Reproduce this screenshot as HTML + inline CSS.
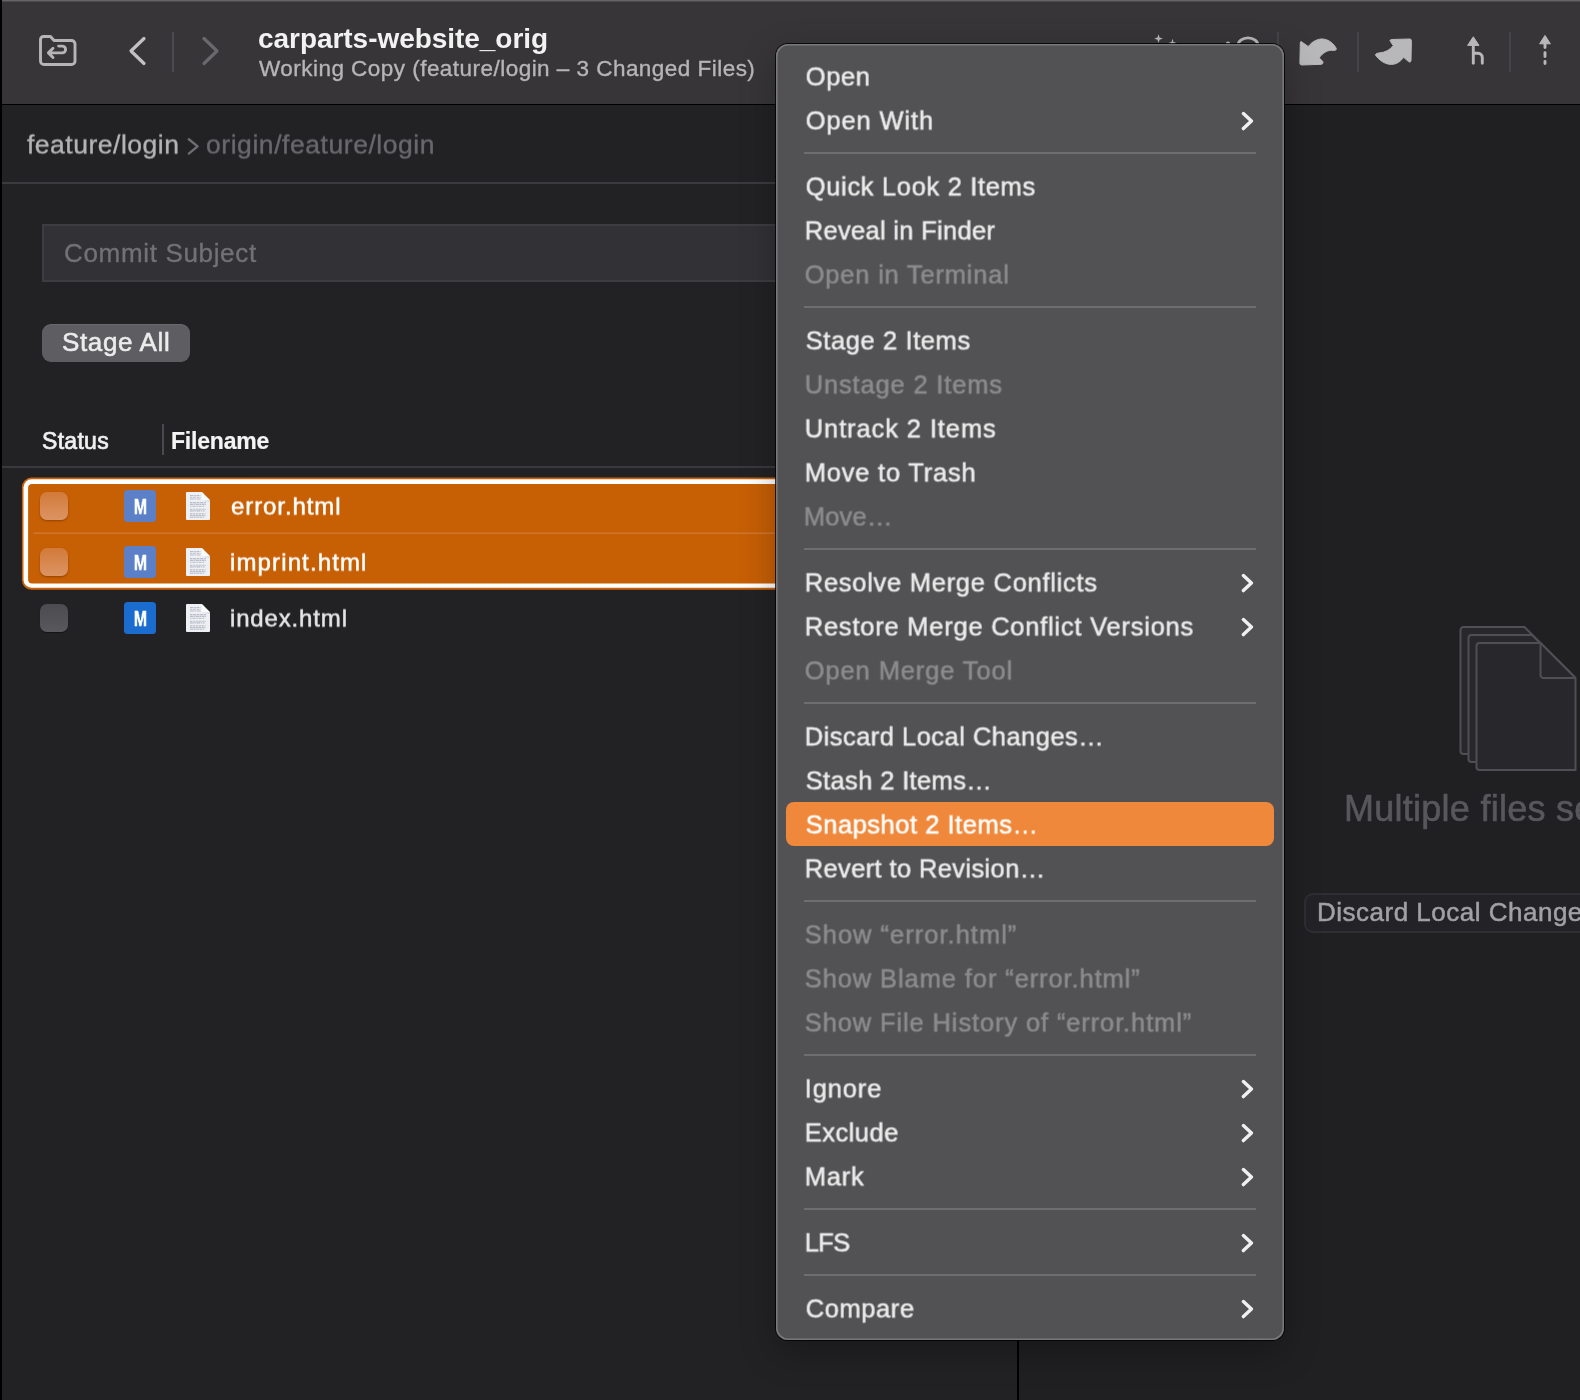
<!DOCTYPE html>
<html lang="en">
<head>
<meta charset="utf-8">
<title>carparts-website_orig</title>
<style>
*{box-sizing:border-box;margin:0;padding:0}
html,body{width:1580px;height:1400px;overflow:hidden;background:#212023}
body{position:relative;font-family:"Liberation Sans",sans-serif;color:#e8e8e8;-webkit-font-smoothing:antialiased}
.abs{position:absolute}
.t{position:absolute;white-space:nowrap;line-height:1;transform-origin:0 0;-webkit-text-stroke:0.35px currentColor;will-change:transform}
/* window chrome */
#leftedge{left:0;top:0;width:2px;height:1400px;background:#000}
#toolbar{left:2px;top:0;width:1578px;height:104px;background:#373538;border-top:1px solid #656467;box-shadow:inset 0 1px 0 #4b4a4d}
#tbline{left:2px;top:103.5px;width:1578px;height:1.5px;background:#000}
#leftpane{left:2px;top:105px;width:1016px;height:1295px;background:#222124}
#vdiv{left:1017px;top:105px;width:2px;height:1295px;background:#000}
#rightpane{left:1019px;top:105px;width:561px;height:1295px;background:#201f22}
#bcline{left:2px;top:182px;width:1015px;height:2px;background:#3b3a3e}
#subject{left:42px;top:224px;width:960px;height:58px;background:#323135;border:2px solid #3d3c40}
#stage{left:42px;top:324px;width:148px;height:38px;border-radius:9px;background:#5e5d61;box-shadow:inset 0 1px 0 rgba(255,255,255,.07)}
#hdrdiv{left:162px;top:424px;width:2px;height:31px;background:#4a494d}
#hdrline{left:2px;top:466px;width:1015px;height:2px;background:#39383c}
/* selection */
.cb{width:28px;height:28px;border-radius:7px;left:40px}
.cb.on{background:linear-gradient(#d27a38,#dc9464);box-shadow:0 1px 2px rgba(80,30,0,.45)}
.cb.off{background:linear-gradient(#4c4b4f,#59585c);box-shadow:0 1px 1px rgba(0,0,0,.4)}
.badge{left:124px;width:32px;height:32px;border-radius:3.5px;color:#fff;font-weight:bold;font-size:22.5px;text-align:center;line-height:33px}
.badge b{display:inline-block;will-change:transform;transform:scaleX(.70);-webkit-text-stroke:.5px #fff}
.badge.s{background:#5c80c8}
.badge.n{background:#1b6ccf}
.ficon{left:185px;width:26px;height:30px}
/* menu */
#menu{left:776px;top:44px;width:508px;height:1296px;border-radius:12px;background:#525254;
 box-shadow:0 0 0 1px rgba(0,0,0,.8),inset 0 0 0 1.6px #78787a,0 12px 36px rgba(0,0,0,.28);padding-top:10px}
.mi{position:relative;height:44px;line-height:44px;font-size:25.5px;color:#ebebeb;-webkit-text-stroke:0.5px currentColor;padding-left:28px;white-space:nowrap}
.mi.d{color:#8b8b8d}
.mi.h{color:#fff}
.mi.h::before{content:"";position:absolute;left:10px;right:10px;top:0;bottom:0;border-radius:8px;background:#f0883b;z-index:0}
.mi span{position:relative;z-index:1;display:inline-block;will-change:transform;top:1px;transform:matrix(1,0.0001,0,1,-.3,-.55)}
.mi svg{position:absolute;right:30px;top:12.5px;width:14px;height:20px}
.sep{height:2px;margin:10px 28px 10px 28px;background:#6e6e70}
#f1,#f2,#f3{-webkit-text-stroke:.5px currentColor}
#sa{-webkit-text-stroke:.55px currentColor}
#hs{-webkit-text-stroke:.7px currentColor}
#hf{-webkit-text-stroke:.2px currentColor}
#bc1,#bc2,#f1,#f2,#f3{transform:matrix(1,0.0001,0,1,0,.5)}
/*FIT*/
#title{letter-spacing:-0.045px;margin-left:-0.50px}
#subtitle{letter-spacing:0.467px;margin-left:0.50px}
#bc1{letter-spacing:0.508px;margin-left:0.70px}
#bc2{letter-spacing:0.553px;margin-left:-1.00px}
#cs{letter-spacing:0.662px;margin-left:-0.60px}
#sa{letter-spacing:0.638px;margin-left:-0.50px}
#hs{letter-spacing:0.300px;margin-left:0.00px}
#hf{letter-spacing:-0.200px;margin-left:-0.60px}
#f1{letter-spacing:0.911px;margin-left:0.60px}
#f2{letter-spacing:1.127px;margin-left:-0.40px}
#f3{letter-spacing:0.844px;margin-left:-0.40px}
#m0{letter-spacing:0.633px;margin-left:1.80px}
#m1{letter-spacing:0.875px;margin-left:1.80px}
#m2{letter-spacing:0.659px;margin-left:1.80px}
#m3{letter-spacing:0.300px;margin-left:0.80px}
#m4{letter-spacing:0.787px;margin-left:0.80px}
#m5{letter-spacing:0.592px;margin-left:1.80px}
#m6{letter-spacing:0.829px;margin-left:0.80px}
#m7{letter-spacing:0.893px;margin-left:0.80px}
#m8{letter-spacing:0.775px;margin-left:0.80px}
#m9{letter-spacing:0.200px;margin-left:-0.20px}
#m10{letter-spacing:0.727px;margin-left:0.80px}
#m11{letter-spacing:0.763px;margin-left:0.80px}
#m12{letter-spacing:0.886px;margin-left:0.80px}
#m13{letter-spacing:0.471px;margin-left:0.80px}
#m14{letter-spacing:0.354px;margin-left:1.80px}
#m15{letter-spacing:0.513px;margin-left:1.80px}
#m16{letter-spacing:0.367px;margin-left:0.80px}
#m17{letter-spacing:1.000px;margin-left:0.80px}
#m18{letter-spacing:0.896px;margin-left:0.80px}
#m19{letter-spacing:0.875px;margin-left:0.80px}
#m20{letter-spacing:0.860px;margin-left:0.80px}
#m21{letter-spacing:0.483px;margin-left:0.80px}
#m22{letter-spacing:0.800px;margin-left:0.80px}
#m23{letter-spacing:-0.650px;margin-left:0.80px}
#m24{letter-spacing:0.583px;margin-left:1.80px}
/*ENDFIT*/
</style>
</head>
<body>
<div class="abs" id="toolbar"></div>
<div class="abs" id="tbline"></div>
<div class="abs" id="leftpane"></div>
<div class="abs" id="rightpane"></div>
<div class="abs" id="vdiv"></div>
<div class="abs" id="leftedge"></div>

<!-- TOOLBAR-ICONS -->
<svg class="abs" style="left:36px;top:32px" width="44" height="38" viewBox="0 0 44 38" fill="none" stroke="#b5b4b6" stroke-width="2.9" stroke-linecap="round" stroke-linejoin="round">
 <path d="M4.5 9.5 v-2 a3 3 0 0 1 3-3 h7 l3.5 4 h17.5 a3.5 3.5 0 0 1 3.5 3.5 v17 a3.5 3.5 0 0 1-3.5 3.5 h-27.5 a3.5 3.5 0 0 1-3.5-3.5 z"/>
 <path d="M17 16.3 l-4.6 4.6 4.6 4.6 M12.6 20.9 h13.6 a3.4 3.4 0 0 0 0-6.8 h-3.6"/>
</svg>
<svg class="abs" style="left:126px;top:34px" width="24" height="34" viewBox="0 0 24 34" fill="none" stroke="#c2c1c3" stroke-width="3.2" stroke-linecap="round" stroke-linejoin="round"><path d="M18 4.5 L5 17 L18 29.5"/></svg>
<div class="abs" style="left:172px;top:32px;width:2px;height:40px;background:#4b4a4e"></div>
<svg class="abs" style="left:198px;top:34px" width="24" height="34" viewBox="0 0 24 34" fill="none" stroke="#69686c" stroke-width="3.2" stroke-linecap="round" stroke-linejoin="round"><path d="M6 4.5 L19 17 L6 29.5"/></svg>
<div class="t" id="title" style="left:258px;top:25px;font-size:28px;font-weight:bold;color:#f2f2f2;-webkit-text-stroke:0">carparts-website_orig</div>
<div class="t" id="subtitle" style="left:258px;top:57.7px;font-size:22.5px;color:#b6b5b7">Working Copy (feature/login – 3 Changed Files)</div>

<!-- right toolbar icons -->
<svg class="abs" style="left:0;top:0" width="1580" height="104" viewBox="0 0 1580 104">
 <g fill="#b8b7b9">
  <path d="M1158.5 34.2 l1.1 3.3 3.3 1.1 -3.3 1.1 -1.1 3.3 -1.1 -3.3 -3.3 -1.1 3.3 -1.1z"/>
  <path d="M1172.5 38.8 l1 3.2 3.2 1 -3.2 1 -1 3.2 -1 -3.2 -3.2 -1 3.2 -1z"/>
  <circle cx="1228" cy="43.6" r="2.2"/>
  <path stroke="#b8b7b9" stroke-width="1" stroke-linejoin="round" d="M1301.5 41.8 L1308.2 46.5 C1313 40.5 1319 38.6 1323 39 C1329 39.6 1334 44 1336.2 48.3 C1336.7 49.8 1335.3 50.8 1333.5 50.5 C1328 49.5 1322.5 53 1319.2 57.8 L1322.6 61.3 C1323.6 62.8 1322.8 64.2 1321 64.3 L1302 65 C1300.5 65 1299.9 64.3 1299.9 63 L1300.3 43 C1300.4 41.6 1300.9 41.2 1301.5 41.8 Z"/>
  <path stroke="#b8b7b9" stroke-width="1" stroke-linejoin="round" d="M1411.4 40.7 C1411.4 39.6 1410.8 39 1409.7 39 L1391.5 39.5 C1390 39.6 1389.6 40.6 1390.5 41.6 L1393.2 45.6 C1390 50 1385 52.5 1379 53 C1376.5 53.2 1375 54 1375.6 55.2 C1379 60 1385 64.5 1391.5 64.4 C1397 64.3 1401 61 1403.6 57.3 L1408.5 61.6 C1409.7 62.6 1411 62 1411 60.5 Z"/>
  <path d="M1473.3 36.8 L1479 45.4 H1467.6 Z" stroke="#b8b7b9" stroke-width="1" stroke-linejoin="round"/>
  <path d="M1545 35.4 L1550.4 43.8 H1539.6 Z" stroke="#b8b7b9" stroke-width="1" stroke-linejoin="round"/>
 </g>
 <g fill="none" stroke="#b8b7b9" stroke-width="2.9" stroke-linecap="round" stroke-linejoin="round">
  <path d="M1237.8 46 a10.2 8.2 0 0 1 20.4 0" stroke-width="2.8"/>
  <path d="M1473.3 44 V63.2"/>
  <path d="M1473.3 53.3 H1478 a4.3 4.3 0 0 1 4.3 4.3 V63.2"/>
  <path d="M1545 43 V47.6 M1545 52.6 V56.6 M1545 61.4 V63.6"/>
 </g>
 <g fill="#49484c">
  <rect x="1277.2" y="32" width="1.6" height="40"/>
  <rect x="1357.2" y="32" width="1.6" height="40"/>
  <rect x="1509.2" y="32" width="1.6" height="40"/>
 </g>
</svg>

<!-- LEFT-PANE -->
<div class="t" id="bc1" style="left:26px;top:131px;font-size:26.5px;color:#b4b3b5">feature/login</div>
<svg class="abs" style="left:186px;top:135px" width="14" height="22" viewBox="0 0 14 22" fill="none" stroke="#6e6d71" stroke-width="2.4" stroke-linecap="round" stroke-linejoin="round"><path d="M2.8 4.2 L11.6 11.4 L2.8 18.6"/></svg>
<div class="t" id="bc2" style="left:207px;top:131px;font-size:26.5px;color:#69686c">origin/feature/login</div>
<div class="abs" id="bcline"></div>
<div class="abs" id="subject"></div>
<div class="t" id="cs" style="left:65px;top:240px;font-size:26px;color:#727175">Commit Subject</div>
<div class="abs" id="stage"></div>
<div class="t" id="sa" style="left:62px;top:329px;font-size:26px;color:#ececec">Stage All</div>
<div class="t" id="hs" style="left:42px;top:429.6px;font-size:23px;color:#f0f0f0">Status</div>
<div class="abs" id="hdrdiv"></div>
<div class="t" id="hf" style="left:172px;top:429.6px;font-size:23px;font-weight:bold;color:#f4f4f4">Filename</div>
<div class="abs" id="hdrline"></div>

<svg class="abs" style="left:0;top:470px" width="1030" height="128" viewBox="0 470 1030 128">
 <rect x="21.9" y="477.6" width="1010" height="112.2" rx="9.5" fill="#c8620c"/>
 <rect x="23.5" y="479.3" width="1010" height="108.4" rx="8" fill="#fff"/>
 <rect x="28.1" y="483.9" width="1010" height="99.6" rx="4" fill="#c75f05"/>
 <rect x="33.5" y="532.6" width="1000" height="1.2" fill="#d37d3b"/>
</svg>

<div class="abs cb on" style="top:492px"></div>
<div class="abs badge s" style="top:490px"><b>M</b></div>
<svg class="abs ficon" style="top:491px" viewBox="0 0 26 30">
   <path d="M2 1 H16.8 L25 9.2 V28 a1 1 0 0 1-1 1 H2 a1 1 0 0 1-1-1 V2 a1 1 0 0 1 1-1 Z" fill="#eef0f3"/>
   <path d="M16.8 1 L25 9.2 H18.3 a1.5 1.5 0 0 1-1.5-1.5 Z" fill="#fbfcfd"/>
   <path d="M17 9.6 H25 V11 Z" fill="#d3d7dd"/>
   <g stroke="#b7bdc8" stroke-width="1.1" fill="none">
    <path d="M5 4.5 H15.5" stroke-dasharray="3 .7 2 .7"/><path d="M5 6.3 H15.5" stroke-dasharray="2 .6 4 .6"/><path d="M5 8 H15.5" stroke-dasharray="4 .6 1.5 .6"/>
    <path d="M5 11.6 H21" stroke-dasharray="2.5 .7 3 .7"/><path d="M5 13.4 H21" stroke-dasharray="3 .6 1.6 .6"/><path d="M5 15.2 H20" stroke-dasharray="1.6 .6 3.4 .6"/>
    <path d="M5 18.2 H21" stroke-dasharray="2 .7 2.6 .7"/><path d="M5 19.9 H19.5" stroke-dasharray="3.5 .7 1.6 .7"/>
    <path d="M5 22.9 H20.5" stroke-dasharray="2.6 .6 2 .6"/><path d="M5 24.6 H20.5" stroke-dasharray="1.8 .6 3 .6"/><path d="M5 26.2 H19" stroke-dasharray="3 .6 2.2 .6"/>
   </g>
</svg>
<div class="t" id="f1" style="left:230px;top:494px;font-size:24px;color:#fff">error.html</div>

<div class="abs cb on" style="top:548px"></div>
<div class="abs badge s" style="top:546px"><b>M</b></div>
<svg class="abs ficon" style="top:547px" viewBox="0 0 26 30">
   <path d="M2 1 H16.8 L25 9.2 V28 a1 1 0 0 1-1 1 H2 a1 1 0 0 1-1-1 V2 a1 1 0 0 1 1-1 Z" fill="#eef0f3"/>
   <path d="M16.8 1 L25 9.2 H18.3 a1.5 1.5 0 0 1-1.5-1.5 Z" fill="#fbfcfd"/>
   <path d="M17 9.6 H25 V11 Z" fill="#d3d7dd"/>
   <g stroke="#b7bdc8" stroke-width="1.1" fill="none">
    <path d="M5 4.5 H15.5" stroke-dasharray="3 .7 2 .7"/><path d="M5 6.3 H15.5" stroke-dasharray="2 .6 4 .6"/><path d="M5 8 H15.5" stroke-dasharray="4 .6 1.5 .6"/>
    <path d="M5 11.6 H21" stroke-dasharray="2.5 .7 3 .7"/><path d="M5 13.4 H21" stroke-dasharray="3 .6 1.6 .6"/><path d="M5 15.2 H20" stroke-dasharray="1.6 .6 3.4 .6"/>
    <path d="M5 18.2 H21" stroke-dasharray="2 .7 2.6 .7"/><path d="M5 19.9 H19.5" stroke-dasharray="3.5 .7 1.6 .7"/>
    <path d="M5 22.9 H20.5" stroke-dasharray="2.6 .6 2 .6"/><path d="M5 24.6 H20.5" stroke-dasharray="1.8 .6 3 .6"/><path d="M5 26.2 H19" stroke-dasharray="3 .6 2.2 .6"/>
   </g>
</svg>
<div class="t" id="f2" style="left:230px;top:550px;font-size:24px;color:#fff">imprint.html</div>

<div class="abs cb off" style="top:604px"></div>
<div class="abs badge n" style="top:602px"><b>M</b></div>
<svg class="abs ficon" style="top:603px" viewBox="0 0 26 30">
   <path d="M2 1 H16.8 L25 9.2 V28 a1 1 0 0 1-1 1 H2 a1 1 0 0 1-1-1 V2 a1 1 0 0 1 1-1 Z" fill="#eef0f3"/>
   <path d="M16.8 1 L25 9.2 H18.3 a1.5 1.5 0 0 1-1.5-1.5 Z" fill="#fbfcfd"/>
   <path d="M17 9.6 H25 V11 Z" fill="#d3d7dd"/>
   <g stroke="#b7bdc8" stroke-width="1.1" fill="none">
    <path d="M5 4.5 H15.5" stroke-dasharray="3 .7 2 .7"/><path d="M5 6.3 H15.5" stroke-dasharray="2 .6 4 .6"/><path d="M5 8 H15.5" stroke-dasharray="4 .6 1.5 .6"/>
    <path d="M5 11.6 H21" stroke-dasharray="2.5 .7 3 .7"/><path d="M5 13.4 H21" stroke-dasharray="3 .6 1.6 .6"/><path d="M5 15.2 H20" stroke-dasharray="1.6 .6 3.4 .6"/>
    <path d="M5 18.2 H21" stroke-dasharray="2 .7 2.6 .7"/><path d="M5 19.9 H19.5" stroke-dasharray="3.5 .7 1.6 .7"/>
    <path d="M5 22.9 H20.5" stroke-dasharray="2.6 .6 2 .6"/><path d="M5 24.6 H20.5" stroke-dasharray="1.8 .6 3 .6"/><path d="M5 26.2 H19" stroke-dasharray="3 .6 2.2 .6"/>
   </g>
</svg>
<div class="t" id="f3" style="left:230px;top:606px;font-size:24px;color:#e4e4e4">index.html</div>


<!-- RIGHT-PANE -->
<svg class="abs" style="left:1456px;top:622px" width="124" height="152" viewBox="0 0 124 152" fill="#28272b" stroke="#504f53" stroke-width="2">
 <path d="M7.5 5 H68.5 L118 54.5 V132 H7.5 a3 3 0 0 1-3-3 V8 a3 3 0 0 1 3-3 Z"/>
 <path d="M15.5 13 H76 L118.7 55.5 V140 H15.5 a3 3 0 0 1-3-3 V16 a3 3 0 0 1 3-3 Z"/>
 <path d="M23.5 21 H84.5 L119.5 56 V148 H23.5 a3 3 0 0 1-3-3 V24 a3 3 0 0 1 3-3 Z"/>
 <path d="M84.5 21 V53 a3 3 0 0 0 3 3 H119.5" fill="none"/>
</svg>
<div class="t" id="mf" style="left:1343.5px;top:791px;font-size:36px;letter-spacing:.26px;-webkit-text-stroke:.6px currentColor;color:#58575b">Multiple files selected</div>
<div class="abs" style="left:1304px;top:893px;width:300px;height:40px;border-radius:9px;border:2px solid #2f2e32;background:#232226"></div>
<div class="t" id="dl" style="left:1316.5px;top:899px;font-size:26px;letter-spacing:.5px;-webkit-text-stroke:.5px currentColor;color:#a2a1a3">Discard Local Changes…</div>

<!-- MENU -->
<div class="abs" id="menu">
 <div class="mi"><span id="m0">Open</span></div>
 <div class="mi"><span id="m1">Open With</span><svg viewBox="0 0 14 20" fill="none" stroke="#f0f0f0" stroke-width="3.4" stroke-linecap="round" stroke-linejoin="round"><path d="M3.4 2.6 L11.4 10.1 L3.4 17.6"/></svg></div>
 <div class="sep"></div>
 <div class="mi"><span id="m2">Quick Look 2 Items</span></div>
 <div class="mi"><span id="m3">Reveal in Finder</span></div>
 <div class="mi d"><span id="m4">Open in Terminal</span></div>
 <div class="sep"></div>
 <div class="mi"><span id="m5">Stage 2 Items</span></div>
 <div class="mi d"><span id="m6">Unstage 2 Items</span></div>
 <div class="mi"><span id="m7">Untrack 2 Items</span></div>
 <div class="mi"><span id="m8">Move to Trash</span></div>
 <div class="mi d"><span id="m9">Move…</span></div>
 <div class="sep"></div>
 <div class="mi"><span id="m10">Resolve Merge Conflicts</span><svg viewBox="0 0 14 20" fill="none" stroke="#f0f0f0" stroke-width="3.4" stroke-linecap="round" stroke-linejoin="round"><path d="M3.4 2.6 L11.4 10.1 L3.4 17.6"/></svg></div>
 <div class="mi"><span id="m11">Restore Merge Conflict Versions</span><svg viewBox="0 0 14 20" fill="none" stroke="#f0f0f0" stroke-width="3.4" stroke-linecap="round" stroke-linejoin="round"><path d="M3.4 2.6 L11.4 10.1 L3.4 17.6"/></svg></div>
 <div class="mi d"><span id="m12">Open Merge Tool</span></div>
 <div class="sep"></div>
 <div class="mi"><span id="m13">Discard Local Changes…</span></div>
 <div class="mi"><span id="m14">Stash 2 Items…</span></div>
 <div class="mi h"><span id="m15">Snapshot 2 Items…</span></div>
 <div class="mi"><span id="m16">Revert to Revision…</span></div>
 <div class="sep"></div>
 <div class="mi d"><span id="m17">Show “error.html”</span></div>
 <div class="mi d"><span id="m18">Show Blame for “error.html”</span></div>
 <div class="mi d"><span id="m19">Show File History of “error.html”</span></div>
 <div class="sep"></div>
 <div class="mi"><span id="m20">Ignore</span><svg viewBox="0 0 14 20" fill="none" stroke="#f0f0f0" stroke-width="3.4" stroke-linecap="round" stroke-linejoin="round"><path d="M3.4 2.6 L11.4 10.1 L3.4 17.6"/></svg></div>
 <div class="mi"><span id="m21">Exclude</span><svg viewBox="0 0 14 20" fill="none" stroke="#f0f0f0" stroke-width="3.4" stroke-linecap="round" stroke-linejoin="round"><path d="M3.4 2.6 L11.4 10.1 L3.4 17.6"/></svg></div>
 <div class="mi"><span id="m22">Mark</span><svg viewBox="0 0 14 20" fill="none" stroke="#f0f0f0" stroke-width="3.4" stroke-linecap="round" stroke-linejoin="round"><path d="M3.4 2.6 L11.4 10.1 L3.4 17.6"/></svg></div>
 <div class="sep"></div>
 <div class="mi"><span id="m23">LFS</span><svg viewBox="0 0 14 20" fill="none" stroke="#f0f0f0" stroke-width="3.4" stroke-linecap="round" stroke-linejoin="round"><path d="M3.4 2.6 L11.4 10.1 L3.4 17.6"/></svg></div>
 <div class="sep"></div>
 <div class="mi"><span id="m24">Compare</span><svg viewBox="0 0 14 20" fill="none" stroke="#f0f0f0" stroke-width="3.4" stroke-linecap="round" stroke-linejoin="round"><path d="M3.4 2.6 L11.4 10.1 L3.4 17.6"/></svg></div>
</div>

</body>
</html>
